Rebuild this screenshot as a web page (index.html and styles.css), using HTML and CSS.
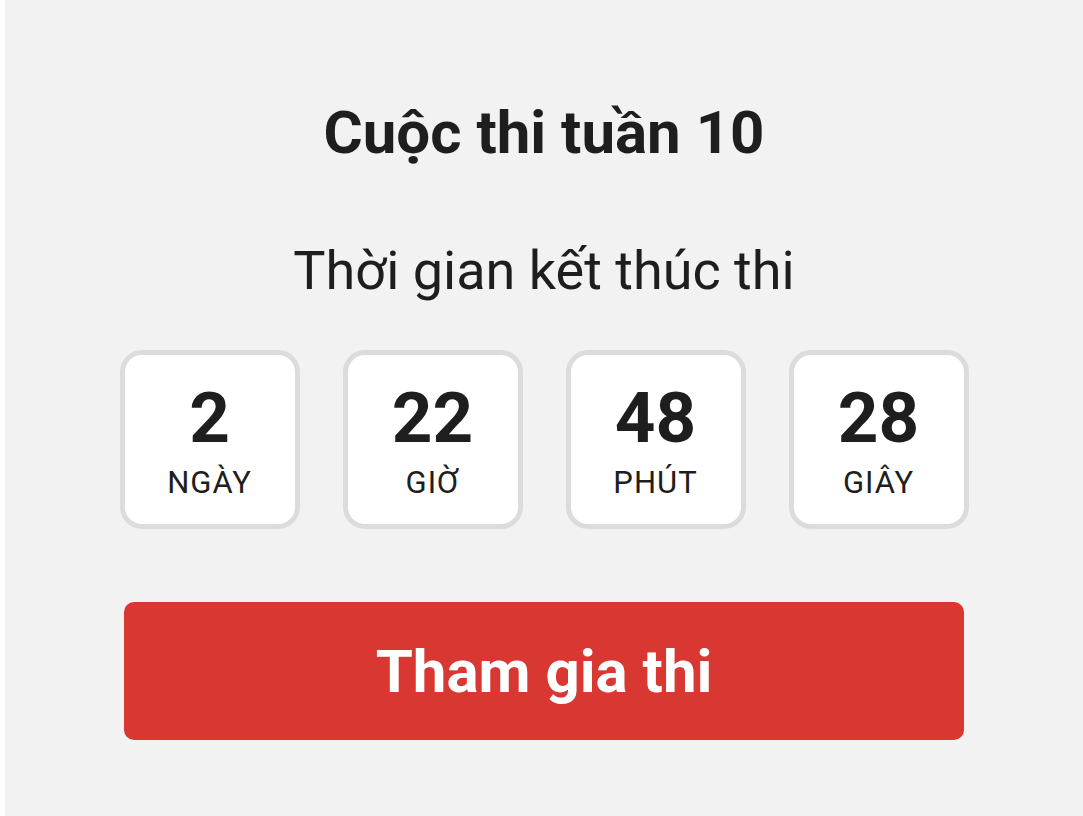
FILE: index.html
```html
<!DOCTYPE html>
<html lang="vi">
<head>
    <meta charset="UTF-8">
    <meta name="viewport" content="width=device-width, initial-scale=1.0">
    <title>Cuộc thi tuần 10</title>
    <link rel="stylesheet" href="styles.css">
</head>
<body>
    <main class="contest">
        <h1 class="contest-title">Cuộc thi tuần 10</h1>
        <p class="contest-subtitle">Thời gian kết thúc thi</p>

        <div class="countdown" id="countdown">
            <div class="time-box">
                <span class="time-value">2</span>
                <span class="time-label">NGÀY</span>
            </div>
            <div class="time-box">
                <span class="time-value">22</span>
                <span class="time-label">GIỜ</span>
            </div>
            <div class="time-box">
                <span class="time-value">48</span>
                <span class="time-label">PHÚT</span>
            </div>
            <div class="time-box">
                <span class="time-value">28</span>
                <span class="time-label">GIÂY</span>
            </div>
        </div>

        <button class="join-button" type="button">Tham gia thi</button>
    </main>
</body>
</html>
```

FILE: styles.css
```css
* {
    box-sizing: border-box;
    margin: 0;
    padding: 0;
    font-family: Roboto, 'Noto Sans', sans-serif;
}

body {
    background-color: #ffffff;
    padding-left: 5px;
}

.contest {
    min-height: 816px;
    background-color: #f2f2f2;
    color: #1e1e1e;
    display: flex;
    flex-direction: column;
    align-items: center;
    padding-top: 97px;
}

.contest-title {
    font-size: 60px;
    line-height: 72px;
    font-weight: 700;
}

.contest-subtitle {
    margin-top: 70px;
    font-size: 54px;
    line-height: 64px;
    font-weight: 400;
}

.countdown {
    margin-top: 47px;
    display: flex;
    gap: 43px;
}

.time-box {
    width: 180px;
    height: 179px;
    background-color: #ffffff;
    border: 5px solid #dcdcdc;
    border-radius: 22px;
    display: flex;
    flex-direction: column;
    align-items: center;
    padding-top: 27px;
    gap: 14px;
}

.time-value {
    font-size: 71px;
    line-height: 71px;
    font-weight: 700;
}

.time-label {
    font-size: 31px;
    line-height: 31px;
    letter-spacing: 1px;
}

.join-button {
    margin-top: 73px;
    width: 840px;
    height: 138px;
    background-color: #d93731;
    color: #ffffff;
    border: none;
    border-radius: 10px;
    font-size: 60px;
    font-weight: 700;
    cursor: pointer;
}
```
